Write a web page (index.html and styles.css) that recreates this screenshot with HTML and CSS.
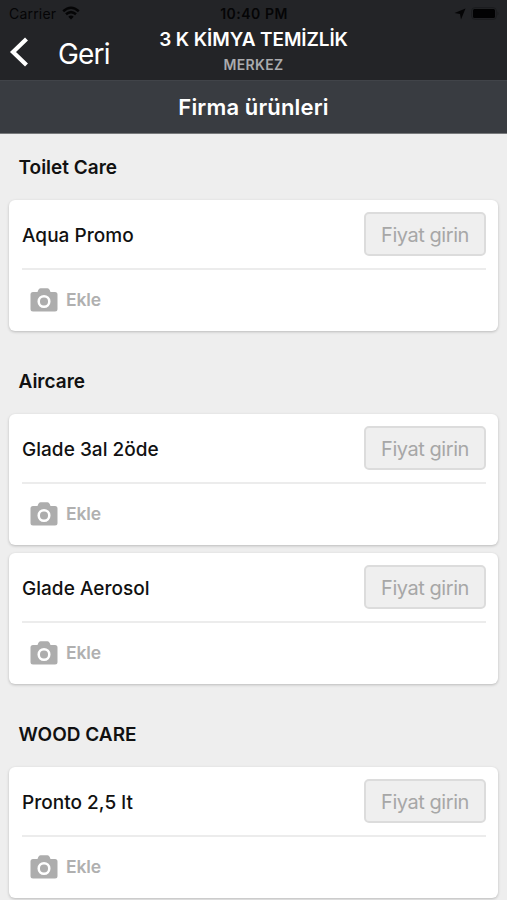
FILE: index.html
```html
<!DOCTYPE html>
<html lang="tr">
<head>
<meta charset="utf-8">
<meta name="viewport" content="width=device-width">
<title>Firma ürünleri</title>
<link rel="stylesheet" href="styles.css">
</head>
<body>
<svg class="defs" width="0" height="0" aria-hidden="true">
  <symbol id="camera" viewBox="0 0 28 24">
    <path fill="#adadad" d="M3 4h4.500l.8-2Q9 .3 10.500.3h7q1.500 0 2.200 1.700l.8 2H25q2.500 0 2.500 2.500v14.500q0 2.500-2.500 2.500H3Q.5 23.500.5 21V6.500Q.5 4 3 4z"/>
    <circle cx="14" cy="13.500" r="5.300" fill="#adadad" stroke="#fff" stroke-width="2.500"/>
  </symbol>
</svg>
<header class="navbar">
  <div class="status">
    <div class="carrier"><span>Carrier</span>
      <svg width="18" height="14" viewBox="0 0 18 14" fill="none" stroke="#050506" stroke-width="2.500"><path d="M1.200 5.200q7.800-6.900 15.600 0M4 8.300q5-4.400 10 0"/><path fill="#050506" stroke="none" d="M6.300 10.700q2.700-2.300 5.400 0L9 13.500z"/></svg>
    </div>
    <span class="clock">10:40 PM</span>
    <div class="indicators">
      <svg width="12" height="12" viewBox="0 0 12 12"><path fill="#050506" d="M11.500.5 7 11.500 6 6 .5 5z"/></svg>
      <svg width="28" height="13" viewBox="0 0 28 13"><rect x=".7" y=".7" width="24.600" height="11.600" rx="3" fill="none" stroke="#1b1c1e"/><rect x="2" y="2" width="22" height="9" rx="1.500" fill="#020203"/><path d="M26.500 4.500q2 2 0 4z" fill="#1b1c1e"/></svg>
    </div>
  </div>
  <div class="nav">
    <div class="back">
      <svg width="20" height="32" viewBox="0 0 20 32"><path d="M17.500 3 4 16l13.500 13" fill="none" stroke="#fff" stroke-width="4.200"/></svg>
      <span>Geri</span>
    </div>
    <div class="customer"><h1>3 K KİMYA TEMİZLİK</h1><p>MERKEZ</p></div>
  </div>
</header>
<div class="titlebar"><span>Firma ürünleri</span></div>
<main>
  <section>
    <h2>Toilet Care</h2>
    <article class="card">
      <div class="product"><span class="name">Aqua Promo</span><button class="price">Fiyat girin</button></div>
      <div class="add"><svg width="28" height="24"><use href="#camera"/></svg><span>Ekle</span></div>
    </article>
  </section>
  <section>
    <h2>Aircare</h2>
    <article class="card">
      <div class="product"><span class="name">Glade 3al 2öde</span><button class="price">Fiyat girin</button></div>
      <div class="add"><svg width="28" height="24"><use href="#camera"/></svg><span>Ekle</span></div>
    </article>
    <article class="card">
      <div class="product"><span class="name">Glade Aerosol</span><button class="price">Fiyat girin</button></div>
      <div class="add"><svg width="28" height="24"><use href="#camera"/></svg><span>Ekle</span></div>
    </article>
  </section>
  <section>
    <h2>WOOD CARE</h2>
    <article class="card">
      <div class="product"><span class="name">Pronto 2,5 lt</span><button class="price">Fiyat girin</button></div>
      <div class="add"><svg width="28" height="24"><use href="#camera"/></svg><span>Ekle</span></div>
    </article>
  </section>
</main>
</body>
</html>
```
FILE: styles.css
```css
* { box-sizing: border-box; }
html { overflow: hidden; }
body { margin: 0; height: 900px; overflow: hidden; background: #eee; color: #111; font-family: Inter, "Liberation Sans", sans-serif; }
h1, h2, p { margin: 0; }
svg { display: block; flex: none; }
.defs { position: absolute; }
.navbar { height: 80px; background: #232427; }
.status { display: grid; grid-template-columns: 1fr auto 1fr; align-items: center; height: 27px; padding: 0 8px 0 9px; color: #050506; font-size: 14px; line-height: 27px; }
.carrier { display: flex; align-items: center; gap: 6px; letter-spacing: .2px; }
.carrier svg { margin-top: -2px; }
.clock { font-weight: 600; letter-spacing: .5px; }
.indicators { display: flex; justify-content: flex-end; align-items: center; gap: 5px; }
.nav { display: grid; grid-template-columns: 1fr auto 1fr; height: 53px; }
.back { display: flex; align-items: center; height: 54px; gap: 29px; padding-left: 9px; color: #fff; font-size: 28px; letter-spacing: -.8px; }
.back svg { margin-top: -4px; }
.customer { text-align: center; color: #fff; }
h1 { font-size: 19px; line-height: 25px; font-weight: 600; letter-spacing: -.1px; white-space: nowrap; }
.customer p { color: #aaabae; font-size: 14px; line-height: 26px; font-weight: 600; letter-spacing: .3px; }
.titlebar { height: 54px; display: flex; align-items: center; justify-content: center; background: #393c41; border-top: 1px solid #414449; border-bottom: 1px solid #77797b; color: #fff; font-size: 22px; font-weight: 600; letter-spacing: .15px; }
main { padding: 0 9px; }
section + section { margin-top: 17px; }
h2 { height: 66px; padding-left: 9.5px; font-size: 19px; line-height: 68px; font-weight: 600; letter-spacing: 0; }
.card { height: 131px; padding: 0 12px 0 13px; border-radius: 6px; background: #fff; box-shadow: 0 1px 3px rgba(0,0,0,.22); }
.card + .card { margin-top: 8px; }
.product { height: 70px; border-bottom: 2px solid #ececec; display: flex; align-items: center; justify-content: space-between; }
.name { padding-top: 2px; font-size: 19px; font-weight: 500; letter-spacing: .03px; }
.price { width: 122px; height: 44px; padding: 1px 0 0; border: 2px solid #dcdcdc; border-radius: 5px; background: #efefef; color: #a7a7a7; font: 400 20px Inter, "Liberation Sans", sans-serif; letter-spacing: -.45px; }
.add { height: 59px; display: flex; align-items: center; gap: 8px; padding-left: 8px; color: #b0b0b0; font-size: 17.5px; font-weight: 600; letter-spacing: -.1px; }
```
